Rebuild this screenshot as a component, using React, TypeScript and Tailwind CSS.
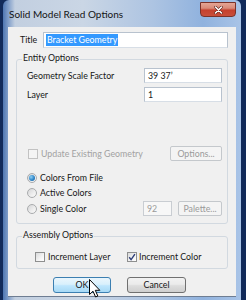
import React from "react";

function Checkbox({ checked = false, disabled = false }: { checked?: boolean; disabled?: boolean }) {
  return (
    <div
      className={
        "w-[10px] h-[10px] shrink-0 border flex items-center justify-center " +
        (disabled
          ? "border-[#c2c2c2] bg-[#f4f4f4]"
          : "border-[#8e8f8f] bg-[linear-gradient(135deg,#d9dadb_0%,#f4f4f4_60%,#ffffff_100%)]")
      }
    >
      {checked && (
        <svg width="8" height="8" viewBox="0 0 8 8">
          <path d="M1.2 4.2 L3.1 6.6 L6.9 1.2" fill="none" stroke="#2d3d78" strokeWidth="1.4" />
        </svg>
      )}
    </div>
  );
}

function Radio({ selected = false }: { selected?: boolean }) {
  return (
    <div className="w-[10px] h-[10px] shrink-0 rounded-full border border-[#a9abad] bg-[linear-gradient(135deg,#d4d5d6_0%,#eeeeee_60%,#fafafa_100%)] flex items-center justify-center">
      {selected && (
        <div className="w-[6px] h-[6px] rounded-full bg-[radial-gradient(circle_at_35%_35%,#8fd0f6_0%,#2f86c8_55%,#1a5c9a_100%)]" />
      )}
    </div>
  );
}

function TextBox({ w, children, disabled = false }: { w: string; children?: React.ReactNode; disabled?: boolean }) {
  return (
    <div
      className={
        w +
        " h-[15px] border flex items-center pl-[3px] " +
        (disabled
          ? "border-[#c9cdd2] bg-[#f7f7f7] text-[#9a9a9a]"
          : "border-[#b8c2ce] border-b-[#d7dee6] bg-white text-[#1b1b1b]")
      }
    >
      {children}
    </div>
  );
}

function DisabledButton({ w, label }: { w: string; label: string }) {
  return (
    <div
      className={
        w +
        " h-[15px] border border-[#c4c8cc] rounded-[2px] bg-[#f4f4f4] flex items-center justify-center text-[#9a9a9a]"
      }
    >
      {label}
    </div>
  );
}

export default function App() {
  return (
    <div className="relative w-[246px] h-[300px] overflow-hidden bg-[#112a5a] font-[Lato,'Liberation_Sans',sans-serif]">
      <div className="ml-[3px] w-[238px] h-[300px] rounded-t-[6px] px-[5px] flex flex-col bg-[linear-gradient(90deg,#4e76b2_0px,#7e9cc8_5px,#c2cfe0_12px,#cad6e5_80px,#adc4e2_150px,#90b2de_200px,#a9c4e7_238px)]">
        {/* title bar */}
        <div className="h-[27px] flex justify-between">
          <span className="self-center pl-[1px] text-[10px] text-[#141414] leading-[14px]">Solid Model Read Options</span>
          <div className="mt-[2px] w-[36px] h-[15px] rounded-b-[4px] border border-[#7b3229] bg-[linear-gradient(180deg,#e4a595_0%,#d98a78_40%,#c5412e_55%,#c84f3b_100%)] flex items-center justify-center">
            <svg width="9" height="8" viewBox="0 0 9 8">
              <path d="M1.5 1 L7.5 7 M7.5 1 L1.5 7" stroke="#5a1a12" strokeWidth="2.6" strokeLinecap="round" />
              <path d="M1.5 1 L7.5 7 M7.5 1 L1.5 7" stroke="#ffffff" strokeWidth="1.6" strokeLinecap="round" />
            </svg>
          </div>
        </div>

        {/* client area */}
        <div className="w-[228px] h-[270px] bg-[#f0f0f0] border-b border-[#6e7d92] flex flex-col text-[8.8px] leading-[12px] text-[#161616]">
          {/* Title row */}
          <div className="mt-[5px] ml-[12px] h-[16px] flex items-center">
            <span className="w-[23px]">Title</span>
            <div className="w-[185px] h-[16px] border border-[#b8c2ce] border-b-[#d7dee6] bg-white flex items-center pl-[2px]">
              <span className="bg-[#3399ff] text-white px-[1px] h-[12px]">Bracket Geometry</span>
            </div>
          </div>

          {/* Entity Options */}
          <div className="mt-[11px] mx-[8px] h-[165px] border border-[#d2d9e0] rounded-[3px] flex flex-col">
            <span className="-mt-[8px] ml-[5px] px-[1px] w-fit bg-[#f0f0f0]">Entity Options</span>
            <div className="mt-[4px] h-[15px] pl-[10px] pr-[5px] flex items-center justify-between">
              <span>Geometry Scale Factor</span>
              <TextBox w="w-[78px]">39 37&#x2019;</TextBox>
            </div>
            <div className="mt-[4px] h-[15px] pl-[10px] pr-[5px] flex items-center justify-between">
              <span>Layer</span>
              <TextBox w="w-[78px]">1</TextBox>
            </div>
            <div className="mt-[44px] h-[15px] pl-[11px] pr-[5px] flex items-center justify-between">
              <div className="flex items-center gap-[3px] text-[#a2a2a2]">
                <Checkbox disabled />
                <span>Update Existing Geometry</span>
              </div>
              <DisabledButton w="w-[52px]" label="Options..." />
            </div>
            <div className="mt-[9px] h-[15px] pl-[10px] flex items-center gap-[3px]">
              <Radio selected />
              <span>Colors From File</span>
            </div>
            <div className="h-[15px] pl-[10px] flex items-center gap-[3px]">
              <Radio />
              <span>Active Colors</span>
            </div>
            <div className="mt-[1px] h-[15px] pl-[10px] pr-[5px] flex items-center justify-between">
              <div className="flex items-center gap-[3px]">
                <Radio />
                <span>Single Color</span>
              </div>
              <div className="flex items-center gap-[6px]">
                <TextBox w="w-[29px]" disabled>
                  92
                </TextBox>
                <DisabledButton w="w-[44px]" label="Palette..." />
              </div>
            </div>
          </div>

          {/* Assembly Options */}
          <div className="mt-[12px] mx-[8px] h-[33px] border border-[#d2d9e0] rounded-[3px] flex flex-col">
            <span className="-mt-[8px] ml-[5px] px-[1px] w-fit bg-[#f0f0f0]">Assembly Options</span>
            <div className="mt-[10px] h-[11px] pl-[18px] flex items-center">
              <div className="w-[92px] flex items-center gap-[3px]">
                <Checkbox />
                <span>Increment Layer</span>
              </div>
              <div className="flex items-center gap-[2px]">
                <Checkbox checked />
                <span>Increment Color</span>
              </div>
            </div>
          </div>

          {/* Buttons */}
          <div className="mt-[8px] ml-[45px] flex gap-[16px]">
            <div className="w-[58px] h-[16px] rounded-[3px] border border-[#3c7fb1] bg-[linear-gradient(180deg,#eaf6fd_0%,#d9f0fc_45%,#bee6fd_55%,#a7d9f5_100%)] flex items-center justify-center">
              OK
            </div>
            <div className="w-[59px] h-[16px] rounded-[3px] border border-[#707070] bg-[linear-gradient(180deg,#f2f2f2_0%,#ebebeb_45%,#dddddd_55%,#cfcfcf_100%)] flex items-center justify-center">
              Cancel
            </div>
          </div>
        </div>
      </div>

      {/* mouse cursor */}
      <svg className="absolute left-[89px] top-[279px]" width="12" height="19" viewBox="0 0 12 19">
        <path d="M0.5 0.5 L0.5 15.5 L4 12.2 L6.6 18 L8.8 17 L6.3 11.3 L10.8 11.3 Z" fill="#ffffff" stroke="#000000" strokeWidth="1" strokeLinejoin="round" />
      </svg>
    </div>
  );
}
